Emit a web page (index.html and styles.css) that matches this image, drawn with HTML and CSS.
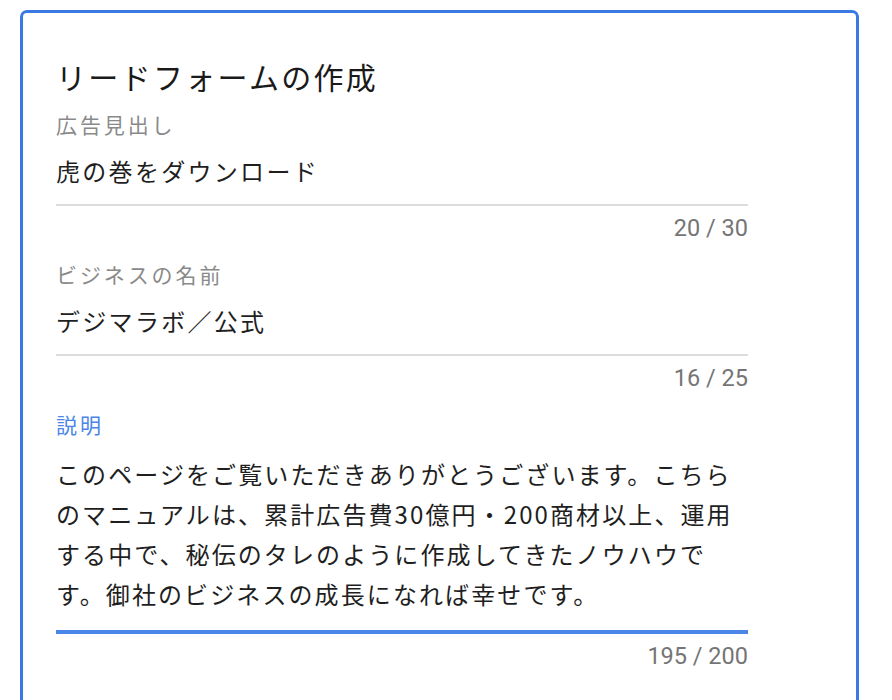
FILE: index.html
```html
<!DOCTYPE html>
<html lang="ja">
<head>
<meta charset="utf-8">
<title>リードフォームの作成</title>
<link rel="stylesheet" href="styles.css">
</head>
<body>
<div class="card">
  <h1 class="title">リードフォームの作成</h1>

  <div class="field">
    <div class="label">広告見出し</div>
    <div class="value">虎の巻をダウンロード</div>
    <div class="counter">20 / 30</div>
  </div>

  <div class="field">
    <div class="label">ビジネスの名前</div>
    <div class="value">デジマラボ／公式</div>
    <div class="counter">16 / 25</div>
  </div>

  <div class="field field-active">
    <div class="label">説明</div>
    <div class="value value-multi">このページをご覧いただきありがとうございます。こちらのマニュアルは、累計広告費30億円・200商材以上、運用する中で、秘伝のタレのように作成してきたノウハウです。御社のビジネスの成長になれば幸せです。</div>
    <div class="counter">195 / 200</div>
  </div>
</div>
</body>
</html>
```

FILE: styles.css
```css
html, body {
  margin: 0;
  padding: 0;
  background: #ffffff;
}

body {
  padding: 10px 0 0 20px;
  font-family: "Noto Sans CJK JP", "Noto Sans", sans-serif;
  color: #1f1f1f;
}

.card {
  box-sizing: border-box;
  width: 839px;
  height: 760px;
  border: 3px solid #3a79e3;
  border-radius: 7px;
  padding: 41px 0 0 33px;
}

.title {
  margin: 0;
  width: 692px;
  font-size: 30px;
  font-weight: 400;
  line-height: 44px;
  letter-spacing: 2.3px;
  color: #1a1a1a;
}

.field {
  width: 692px;
  margin-top: 20px;
}

.card .field:first-of-type {
  margin-top: 12px;
}

.label {
  font-size: 21px;
  line-height: 28px;
  letter-spacing: 2.9px;
  color: #8a8a8a;
}

.value {
  margin-top: 13px;
  padding-bottom: 13px;
  font-size: 24px;
  line-height: 40px;
  letter-spacing: 2.3px;
  color: #1f1f1f;
  border-bottom: 2px solid #dcdcdc;
}

.value-multi {
  margin-top: 16px;
  padding-bottom: 16px;
  letter-spacing: 2.1px;
  border-bottom: 4px solid #4a86e8;
}

.field-active .label {
  color: #4a86e8;
}

.counter {
  margin-top: 10px;
  font-family: Roboto, "Liberation Sans", sans-serif;
  font-size: 23.5px;
  line-height: 24px;
  text-align: right;
  color: #757575;
}
```
